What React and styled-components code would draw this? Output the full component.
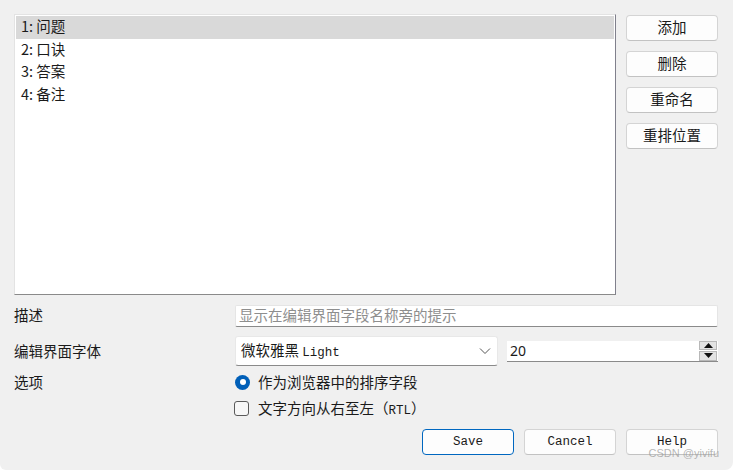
import React, { useState } from 'react';
import styled, { createGlobalStyle } from 'styled-components';

const GlobalStyle = createGlobalStyle`
  html, body {
    margin: 0;
    padding: 0;
    background: #ffffff;
  }
  * {
    box-sizing: border-box;
  }
`;

const CJK = `"Noto Sans CJK SC", "Noto Sans", sans-serif`;
const MONO = `"Liberation Mono", "Noto Sans CJK SC", monospace`;

const Dialog = styled.div`
  position: relative;
  width: 733px;
  height: 470px;
  background: #f0f0f0;
  border-bottom-right-radius: 8px;
  border-bottom-left-radius: 6px;
  padding: 14px 15px 0 14px;
  font-family: ${CJK};
  font-size: 14.5px;
  color: #1a1a1a;
  text-spacing-trim: space-all;
  display: flex;
  flex-direction: column;
`;

const Top = styled.div`
  display: flex;
  gap: 10px;
  height: 281px;
`;

const List = styled.div`
  width: 602px;
  background: #ffffff;
  border: 1px solid #e3e3e3;
  border-right-color: #80808c;
  border-bottom-color: #8a8a8a;
  padding: 1px;
`;

const Item = styled.div`
  height: 22.7px;
  line-height: 20px;
  padding-left: 5px;
  background: ${p => (p.$selected ? '#d9d9d9' : 'transparent')};
  white-space: nowrap;
`;

const SideButtons = styled.div`
  display: flex;
  flex-direction: column;
  gap: 10px;
  padding-top: 1px;
`;

const Button = styled.button`
  width: 92px;
  height: 26px;
  padding: 0 0 ${p => (p.$mono ? '0' : '2px')};
  background: #fdfdfd;
  border: 1px solid #d4d4d4;
  border-bottom-color: #c2c2c2;
  border-radius: 4px;
  color: #1a1a1a;
  font-family: ${p => (p.$mono ? MONO : CJK)};
  font-size: ${p => (p.$mono ? '12.5px' : '14.5px')};
  line-height: 20px;
  cursor: pointer;
  ${p => p.$primary && `
    border: 1px solid #0067c0;
  `}
`;

const Form = styled.div`
  display: grid;
  grid-template-columns: 221px 483px;
  row-gap: 9px;
  margin-top: 9px;
  align-items: center;
`;

const Label = styled.div`
  white-space: nowrap;
  padding-bottom: 2px;
  align-self: ${p => (p.$top ? 'start' : 'center')};
  line-height: ${p => (p.$top ? '22px' : 'normal')};
  margin-top: ${p => (p.$top ? '-4px' : '0')};
`;

const TextInput = styled.input`
  height: 22px;
  width: 100%;
  border: 1px solid #e5e5e5;
  border-bottom-color: #8a8a8a;
  border-radius: 2px;
  background: #ffffff;
  padding: 0 0 2px 3px;
  font-family: ${CJK};
  font-size: 14.5px;
  color: #1a1a1a;
  outline: none;
  &::placeholder {
    color: #8e8e8e;
  }
`;

const FontRow = styled.div`
  display: flex;
  align-items: center;
  gap: 9px;
`;

const Combo = styled.div`
  width: 263px;
  height: 30px;
  background: #ffffff;
  border: 1px solid #e8e8e8;
  border-bottom-color: #8a8a8a;
  border-radius: 3px;
  display: flex;
  align-items: center;
  justify-content: space-between;
  padding: 0 6px 3px 5px;
  white-space: nowrap;
`;

const Mono = styled.span`
  font-family: ${MONO};
  font-size: 12.5px;
  color: #1a1a1a;
`;

const Spin = styled.div`
  flex: 1;
  height: 21px;
  background: #ffffff;
  border-bottom: 1px solid #8a8a8a;
  display: flex;
  align-items: center;
  justify-content: space-between;
  padding-left: 3px;
  font-family: "Noto Sans", sans-serif;
  font-size: 14px;
`;

const Arrows = styled.div`
  display: flex;
  flex-direction: column;
  width: 18px;
  height: 20px;
  margin-right: 1px;
  gap: 1px;
`;

const ArrowBtn = styled.div`
  flex: 1;
  background: #e3e3e3;
  border: 1px solid #b8b8b8;
  display: flex;
  align-items: center;
  justify-content: center;
`;

const Options = styled.div`
  display: flex;
  flex-direction: column;
  gap: 2px;
  margin-top: -5px;
`;

const OptionRow = styled.div`
  display: flex;
  align-items: center;
  gap: 8px;
  height: 24px;
  white-space: nowrap;
  & > span.text {
    padding-bottom: 2px;
  }
`;

const Radio = styled.span`
  width: 15px;
  height: 15px;
  border-radius: 50%;
  background: #005fb8;
  display: flex;
  align-items: center;
  justify-content: center;
  flex-shrink: 0;
  &::after {
    content: '';
    width: 6px;
    height: 6px;
    border-radius: 50%;
    background: #ffffff;
  }
`;

const Check = styled.span`
  width: 15px;
  height: 15px;
  border: 1px solid #5a5a5a;
  border-radius: 3px;
  background: #f7f7f7;
  flex-shrink: 0;
  margin-left: -1px;
  margin-right: 1px;
`;

const Footer = styled.div`
  display: flex;
  justify-content: flex-end;
  gap: 10px;
  margin-top: 9px;
`;

const Watermark = styled.div`
  position: absolute;
  right: 14px;
  bottom: 11px;
  font-family: "Liberation Sans", sans-serif;
  font-size: 11px;
  color: rgba(150, 150, 150, 0.7);
  pointer-events: none;
`;

const fields = ['1: 问题', '2: 口诀', '3: 答案', '4: 备注'];

const App = () => {
  const [selected, setSelected] = useState(0);

  return (
    <>
      <GlobalStyle />
      <Dialog>
        <Top>
          <List>
            {fields.map((f, i) => (
              <Item key={f} $selected={i === selected} onClick={() => setSelected(i)}>
                {f}
              </Item>
            ))}
          </List>
          <SideButtons>
            <Button>添加</Button>
            <Button>删除</Button>
            <Button>重命名</Button>
            <Button>重排位置</Button>
          </SideButtons>
        </Top>

        <Form>
          <Label>描述</Label>
          <TextInput placeholder="显示在编辑界面字段名称旁的提示" />

          <Label>编辑界面字体</Label>
          <FontRow>
            <Combo>
              <span>
                微软雅黑 <Mono>Light</Mono>
              </span>
              <svg width="12" height="8" viewBox="0 0 12 8" style={{ marginTop: 3 }}>
                <path d="M1 1.5 L6 6.5 L11 1.5" fill="none" stroke="#555" strokeWidth="1" />
              </svg>
            </Combo>
            <Spin>
              20
              <Arrows>
                <ArrowBtn>
                  <svg width="9" height="5" viewBox="0 0 9 5">
                    <path d="M0 5 L4.5 0 L9 5 Z" fill="#111" />
                  </svg>
                </ArrowBtn>
                <ArrowBtn>
                  <svg width="9" height="5" viewBox="0 0 9 5">
                    <path d="M0 0 L4.5 5 L9 0 Z" fill="#111" />
                  </svg>
                </ArrowBtn>
              </Arrows>
            </Spin>
          </FontRow>

          <Label $top>选项</Label>
          <Options>
            <OptionRow>
              <Radio />
              <span className="text">作为浏览器中的排序字段</span>
            </OptionRow>
            <OptionRow>
              <Check />
              <span className="text">
                文字方向从右至左（<Mono>RTL</Mono>）
              </span>
            </OptionRow>
          </Options>
        </Form>

        <Footer>
          <Button $mono $primary>Save</Button>
          <Button $mono>Cancel</Button>
          <Button $mono>Help</Button>
        </Footer>
        <Watermark>CSDN @yivifu</Watermark>
      </Dialog>
    </>
  );
};

export default App;
